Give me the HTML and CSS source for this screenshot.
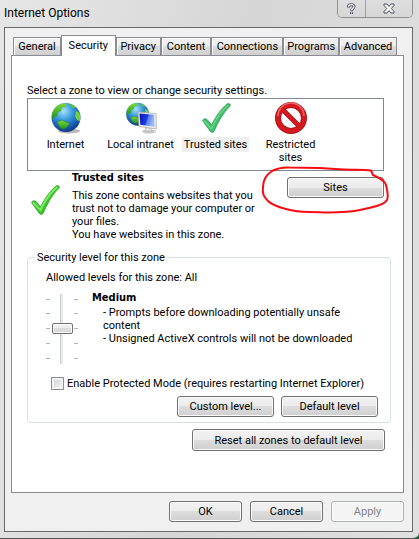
FILE: index.html
```html
<!DOCTYPE html>
<html lang="en">
<head>
    <meta charset="UTF-8">
    <meta name="viewport" content="width=device-width, initial-scale=1.0">
    <title>Internet Options</title>
    <link rel="stylesheet" href="styles.css">
</head>
<body>
    <div class="window">
        <header class="titlebar">
            <h1>Internet Options</h1>
            <div class="window-buttons">
                <button type="button" class="help-btn" aria-label="Help">
                    <svg width="9" height="12" viewBox="0 0 9 12">
                        <path d="M1.500 4.500V3.500C1.500 1 7 1 7 3.600C7 5.500 4.600 5.200 4.600 7.800M4.600 8.800V11" fill="none" stroke="#4c5060" stroke-width="3"/>
                        <path d="M1.500 3.800V3.500C1.500 1 7 1 7 3.600C7 5.500 4.600 5.200 4.600 7.200M4.600 9.300V10.400" fill="none" stroke="#f4f4f4" stroke-width="1.300"/>
                    </svg>
                </button>
                <button type="button" class="close-btn" aria-label="Close">
                    <svg width="12" height="11" viewBox="0 0 12 11">
                        <path d="M1 1h3l2 2.400L8 1h3v1.500L8.300 5.500L11 8.500V10H8L6 7.600L4 10H1V8.500L3.700 5.500L1 2.500z" fill="#f6f6f6" stroke="#4c5060"/>
                    </svg>
                </button>
            </div>
        </header>

        <main class="client">
            <div class="tabs" role="tablist">
                <button type="button" class="tab" role="tab">General</button>
                <button type="button" class="tab active" role="tab" aria-selected="true">Security</button>
                <button type="button" class="tab" role="tab">Privacy</button>
                <button type="button" class="tab" role="tab">Content</button>
                <button type="button" class="tab" role="tab">Connections</button>
                <button type="button" class="tab" role="tab">Programs</button>
                <button type="button" class="tab" role="tab">Advanced</button>
            </div>

            <div class="panel" role="tabpanel">
                <p>Select a zone to view or change security settings.</p>

                <div class="zones">
                    <button type="button" class="zone">
                        <svg width="32" height="32" viewBox="0 0 32 32">
                            <defs>
                                <radialGradient id="sea" cx="42%" cy="28%" r="72%">
                                    <stop offset="0" stop-color="#a5e2fa"/>
                                    <stop offset="0.4" stop-color="#3f9fdf"/>
                                    <stop offset="0.8" stop-color="#1858b4"/>
                                    <stop offset="1" stop-color="#123a86"/>
                                </radialGradient>
                                <linearGradient id="land" x1="0" y1="0" x2="0" y2="1">
                                    <stop offset="0" stop-color="#7ddc3a"/>
                                    <stop offset="1" stop-color="#1f8f1c"/>
                                </linearGradient>
                            </defs>
                            <ellipse cx="19" cy="29" rx="11" ry="2.500" fill="#b8b8b8"/>
                            <g id="globe">
                                <circle cx="16" cy="15.500" r="14.500" fill="url(#sea)"/>
                                <path d="M2 12C3 7 7 2 14 1.200L17 2.500L15 5L12 5.500L11 9L8 10.500L7 14L4 15.500L2 17z" fill="url(#land)"/>
                                <path d="M19 2L24 3.500L26 6L22 5.500z" fill="#63c534"/>
                                <path d="M26 9L29 10.500C30.500 13 30.500 17 29.500 19.500L27 18L25 14z" fill="#6fd238"/>
                                <path d="M7 20L12 18L16 20L20 21L17 25L14 27.500L10 26z" fill="url(#land)" stroke="#16702a" stroke-width="0.5"/>
                            </g>
                        </svg>
                        <span>Internet</span>
                    </button>
                    <button type="button" class="zone">
                        <svg width="32" height="32" viewBox="0 0 32 32">
                            <defs>
                                <linearGradient id="screen" x1="0" y1="0" x2="1" y2="0.3">
                                    <stop offset="0" stop-color="#0a14a8"/>
                                    <stop offset="0.55" stop-color="#1d3be0"/>
                                    <stop offset="0.65" stop-color="#5f84f2"/>
                                    <stop offset="1" stop-color="#9db9fa"/>
                                </linearGradient>
                            </defs>
                            <use href="#globe" transform="scale(0.79)"/>
                            <ellipse cx="24" cy="29.500" rx="7" ry="2" fill="#c9c9c9"/>
                            <path d="M21 25L26 26L27 29L20 29z" fill="#e4e4e4" stroke="#aaa" stroke-width="0.5"/>
                            <path d="M13 10L31 11.500L31.500 27L14 24.500z" fill="#ececec" stroke="#a8a8a8" stroke-width="0.7"/>
                            <path d="M14.500 11.500L29 12.700L29.500 24.800L15.300 22.800z" fill="url(#screen)"/>
                        </svg>
                        <span>Local intranet</span>
                    </button>
                    <button type="button" class="zone selected">
                        <svg width="32" height="32" viewBox="0 0 32 32">
                            <path d="M2.500 18.500C4 16 6.500 16.500 8 18.500L11.500 23C16 14 21 7 27 2C29 1 31 2 30 4C23 11 18 20 14 29.500C12.500 31 11 30.500 10 29z" fill="#3fbf68" stroke="#349a57" stroke-width="0.8"/>
                            <path d="M4 18.500L11.500 27C16 16 22 8 28.500 3" fill="none" stroke="#66d98a" stroke-width="1.400"/>
                        </svg>
                        <span>Trusted sites</span>
                    </button>
                    <button type="button" class="zone">
                        <svg width="32" height="32" viewBox="0 0 32 32">
                            <circle cx="16" cy="16" r="13" fill="none" stroke="#a81118" stroke-width="6"/>
                            <path d="M7 7L25 25" stroke="#a81118" stroke-width="5"/>
                            <circle cx="16" cy="16" r="13" fill="none" stroke="#d5191f" stroke-width="4.500"/>
                            <path d="M7 7L25 25" stroke="#d5191f" stroke-width="3.500"/>
                            <path d="M3 14A13 13 0 0 1 29 14" fill="none" stroke="#e8686b" stroke-width="1.500"/>
                        </svg>
                        <span>Restricted<br>sites</span>
                    </button>
                </div>

                <section class="zone-info">
                    <svg class="info-icon" width="32" height="32" viewBox="0 0 32 32">
                        <path d="M2.500 18.500C4 16 6.500 16.500 8 18.500L11.500 23C16 14 21 7 27 2C29 1 31 2 30 4C23 11 18 20 14 29.500C12.500 31 11 30.500 10 29z" fill="#35c723" stroke="#3c9a38" stroke-width="0.8"/>
                        <path d="M4 18.500L11.500 26C16 16 22 8 28.500 3" fill="none" stroke="#7bec63" stroke-width="2"/>
                    </svg>
                    <div class="info-text">
                        <h2>Trusted sites</h2>
                        <p>This zone contains websites that you<br>trust not to damage your computer or<br>your files.<br>You have websites in this zone.</p>
                    </div>
                    <button type="button" class="btn sites-btn">Sites</button>
                    <svg class="marker" width="132" height="52" viewBox="260 164 132 52">
                        <path d="M386 185C387 190 389 196 387 200C385 204 379 206 369 208C360 210 353 212 342 212C330 213 320 212 309 212C300 212 293 211 286 209C278 207 272 205 268 201C264 197 262 194 263 187C263 181 266 175 272 171C278 168 283 167 289 167.500L319 168L344 169.500C355 170 362 169 371 170.500L373 175L379 178C383 180 385 182 386 185z"/>
                    </svg>
                </section>

                <fieldset class="level">
                    <legend>Security level for this zone</legend>
                    <label class="allowed" for="level">Allowed levels for this zone: All</label>
                    <div class="level-body">
                        <div class="slider">
                            <div class="ticks"><i></i><i></i><i></i><i></i><i></i></div>
                            <input type="range" id="level" min="0" max="4" value="2">
                            <div class="ticks"><i></i><i></i><i></i><i></i><i></i></div>
                        </div>
                        <div class="level-text">
                            <h2>Medium</h2>
                            <p>- Prompts before downloading potentially unsafe<br>content<br>- Unsigned ActiveX controls will not be downloaded</p>
                        </div>
                    </div>
                    <div class="protected">
                        <input type="checkbox" id="protected">
                        <label for="protected">Enable Protected Mode (requires restarting Internet Explorer)</label>
                    </div>
                    <div class="level-buttons">
                        <button type="button" class="btn">Custom level...</button>
                        <button type="button" class="btn">Default level</button>
                    </div>
                </fieldset>

                <button type="button" class="btn reset-btn">Reset all zones to default level</button>
            </div>

            <footer class="actions">
                <button type="button" class="btn">OK</button>
                <button type="button" class="btn">Cancel</button>
                <button type="button" class="btn" disabled>Apply</button>
            </footer>
        </main>
    </div>
</body>
</html>
```
FILE: styles.css
```css
* {
    box-sizing: border-box;
}
body {
    margin: 0;
    background: #14633c;
    color: #000;
    font-family: Roboto, "Liberation Sans", sans-serif;
    font-size: 11px;
    line-height: 13px;
}
h1, h2, p {
    margin: 0;
}
h2 {
    font-family: "DejaVu Sans Condensed", "DejaVu Sans", sans-serif;
    font-size: 11px;
    line-height: 13px;
}
button, input {
    font: inherit;
    color: inherit;
    margin: 0;
}
svg {
    display: block;
}
.window {
    display: flex;
    flex-direction: column;
    min-height: 100vh;
    padding: 0 6px 6px 4px;
    background: linear-gradient(100deg, #e6e6e6, #d6d6d6 50%, #e0e0e0);
    border-bottom: 1px solid #555;
    border-radius: 0 0 6px 0;
}

/* title bar */
.titlebar {
    display: flex;
    justify-content: space-between;
    align-items: flex-start;
    height: 27px;
}
h1 {
    font-size: 12px;
    font-weight: normal;
    line-height: 26px;
}
.window-buttons {
    display: flex;
    height: 18px;
    border: 1px solid #909090;
    border-top: none;
    border-radius: 0 0 5px 5px;
    overflow: hidden;
}
.window-buttons button {
    display: flex;
    justify-content: center;
    align-items: center;
    height: 17px;
    padding: 0;
    border: none;
    background: linear-gradient(#dedede, #d6d6d6);
}
.window-buttons .help-btn {
    width: 28px;
    border-right: 1px solid #a0a0a0;
}
.window-buttons .close-btn {
    width: 46px;
}

/* client area */
.client {
    display: flex;
    flex-direction: column;
    flex: 1;
    padding: 7px 8px 9px 6px;
    border: 1px solid #696969;
    background: #f0f0f0;
}
.tabs {
    display: grid;
    grid-template-columns: 48fr 55fr 45fr 51fr 72fr 56fr 58fr;
    align-items: end;
    height: 20px;
    padding: 0 7px 0 2px;
}
.tab {
    height: 18px;
    padding: 0;
    border: 1px solid #898c95;
    border-bottom: none;
    background: linear-gradient(#f2f2f2, #ebebeb 50%, #dcdcdc 50%, #d0d0d0);
    box-shadow: inset 1px 1px #fff;
    white-space: nowrap;
}
.tab.active {
    position: relative;
    height: 21px;
    margin-bottom: -1px;
    padding-bottom: 2px;
    background: #fff;
}
.panel {
    flex: 1;
    padding: 28px 12px 40px 15px;
    border: 1px solid #898c95;
    background: #fff;
}

/* zone list */
.zones {
    display: flex;
    min-height: 73px;
    margin: 1px 7px 0 0;
    padding: 3px 0 0;
    border: 1px solid #828790;
}
.zone {
    display: flex;
    flex-direction: column;
    align-items: center;
    width: 75px;
    padding: 0;
    border: none;
    background: none;
}
.zone span {
    margin-top: 3px;
    padding: 1px 2px;
    white-space: nowrap;
}
.zone.selected span {
    background: #f0f0f0;
}

/* selected zone */
.zone-info {
    display: flex;
    align-items: flex-start;
    position: relative;
    margin-right: 7px;
}
.info-icon {
    margin: 13px 11px 0 2px;
}
.info-text {
    flex: 1;
    white-space: nowrap;
}
.info-text p {
    margin-top: 5px;
}
.btn {
    height: 21px;
    padding: 0;
    border: 1px solid #707070;
    border-radius: 3px;
    background: linear-gradient(#f2f2f2, #ebebeb 50%, #dddddd 50%, #cfcfcf);
    box-shadow: inset 0 0 0 1px #fbfbfb;
}
.btn:disabled {
    border-color: #adb2b5;
    background: #f4f4f4;
    color: #838383;
}
.sites-btn {
    width: 97px;
    margin-top: 6px;
}
.marker {
    position: absolute;
    top: -7px;
    right: -8px;
    pointer-events: none;
}
.marker path {
    fill: none;
    stroke: #f80c12;
    stroke-width: 2;
}

/* security level */
.level {
    margin: 10px 0 0;
    padding: 7px 12px 5px 18px;
    border: 1px solid #d5dfe5;
    border-radius: 4px;
}
.level legend {
    margin-left: -11px;
    padding: 0 2px;
}
.allowed {
    display: block;
}
.level-body {
    display: flex;
    align-items: flex-start;
    margin-top: 7px;
}
.slider {
    display: flex;
    align-items: center;
    width: 46px;
    height: 75px;
}
.ticks {
    display: flex;
    flex-direction: column;
    justify-content: space-between;
    height: 60px;
    width: 4px;
}
.ticks i {
    height: 1px;
    background: #b4b4b4;
}
.slider input {
    -webkit-appearance: none;
    appearance: none;
    writing-mode: vertical-lr;
    width: 24px;
    height: 70px;
    background: linear-gradient(90deg, transparent 10px, #b0b0b0 10px, #e7eaea 11px, #e7eaea 13px, transparent 13px);
}
.slider input::-webkit-slider-thumb {
    -webkit-appearance: none;
    width: 21px;
    height: 11px;
    border: 1px solid #707070;
    border-radius: 2px;
    background: linear-gradient(#f4f4f4, #ebebeb 50%, #dddddd 50%, #d8d8d8);
    box-shadow: inset 0 0 0 1px #fbfbfb;
}
.level-text {
    flex: 1;
}
.level-text p {
    margin-top: 2px;
    padding-left: 11px;
}
.protected {
    display: flex;
    align-items: center;
    gap: 3px;
    margin: 11px 0 6px 5px;
}
.protected input {
    -webkit-appearance: none;
    appearance: none;
    width: 13px;
    height: 13px;
    border: 1px solid #8e8f8f;
    background: linear-gradient(135deg, #cbcfd5, #f6f6f6);
    box-shadow: inset 0 0 0 2px #f4f4f4;
}
.level-buttons {
    display: flex;
    justify-content: flex-end;
    gap: 7px;
}
.level-buttons .btn {
    width: 97px;
}
.reset-btn {
    display: block;
    width: 193px;
    height: 22px;
    margin: 6px 6px 0 auto;
}
.actions {
    display: flex;
    justify-content: flex-end;
    gap: 8px;
    padding-top: 8px;
}
.actions .btn {
    width: 73px;
}
```
